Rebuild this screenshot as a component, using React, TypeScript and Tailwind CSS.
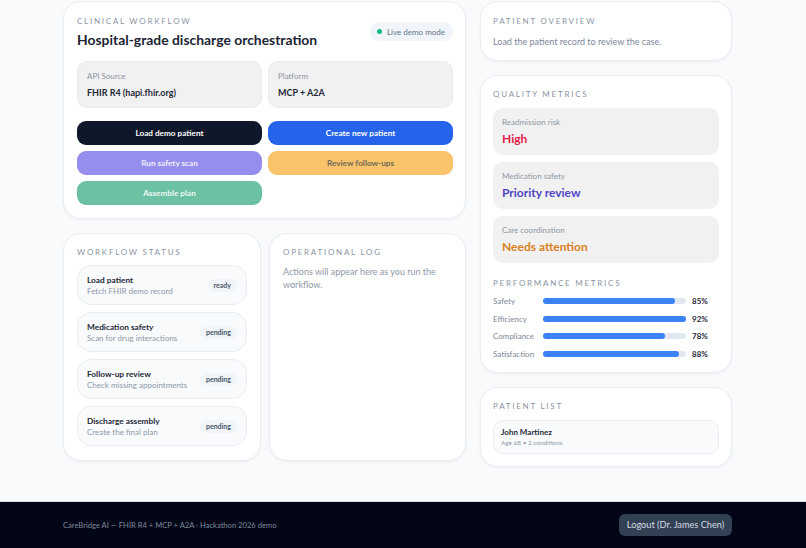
import React from "react";

const font = "font-['Lato','Noto_Sans',sans-serif]";

const Label = ({ text }: { text: string }) => (
  <p className="text-[8px] leading-[12px] uppercase tracking-[1.75px] text-[#8a94a3]">{text}</p>
);

const steps = [
  ["Load patient", "Fetch FHIR demo record", "ready"],
  ["Medication safety", "Scan for drug interactions", "pending"],
  ["Follow-up review", "Check missing appointments", "pending"],
  ["Discharge assembly", "Create the final plan", "pending"],
];

const quality = [
  ["Readmission risk", "High", "text-[#e11d48]"],
  ["Medication safety", "Priority review", "text-[#4f46c5]"],
  ["Care coordination", "Needs attention", "text-[#d97f1e]"],
];

const performance = [
  ["Safety", 92, "85%"],
  ["Efficiency", 100, "92%"],
  ["Compliance", 85, "78%"],
  ["Satisfaction", 95, "88%"],
] as const;

const cardClass = "rounded-[18px] border border-[#e8edf3] bg-white shadow-[0_1px_3px_rgba(15,23,42,0.05)]";

export default function App() {
  return (
    <div className={`${font} flex h-screen flex-col overflow-hidden bg-[#f8fafc] text-[#111827]`}>
      <main className="ml-[63px] flex w-[669px] flex-1 items-start gap-[14px] pt-px">
        {/* Left column */}
        <div className="flex w-[403px] flex-col gap-[14px]">
          <section className={`${cardClass} h-[218px] pt-[13px] pr-[12px] pl-[13px]`}>
            <div className="flex items-start justify-between">
              <div>
                <Label text="Clinical workflow" />
                <h1 className="mt-[3px] text-[13.9px] leading-[20px] font-bold text-[#1b2433]">Hospital-grade discharge orchestration</h1>
              </div>
              <div className="mt-[7px] flex h-[19px] items-center gap-[5px] rounded-full bg-[#f1f5f9] pr-[8px] pl-[7px] text-[8px] text-[#64748b]">
                <span className="h-[5px] w-[5px] rounded-full bg-[#10b981]" />
                Live demo mode
              </div>
            </div>
            <div className="mt-[11px] grid grid-cols-2 gap-[6px]">
              {[["API Source", "FHIR R4 (hapi.fhir.org)"], ["Platform", "MCP + A2A"]].map(([a, b]) => (
                <div key={a} className="h-[47px] rounded-[10px] border border-[#ebebeb] bg-[#f1f1f1] px-[9px] pt-[8px]">
                  <p className="text-[8px] leading-[12px] text-[#8e96a3]">{a}</p>
                  <p className="mt-[4px] text-[9px] leading-[14px] font-bold text-[#1f2937]">{b}</p>
                </div>
              ))}
            </div>
            <div className="mt-[13px] grid grid-cols-2 gap-[6px] text-[8.2px] font-bold">
              <button className="h-[24px] rounded-[9px] bg-[#0f172a] text-white">Load demo patient</button>
              <button className="h-[24px] rounded-[9px] bg-[#2563eb] text-white">Create new patient</button>
              <button className="h-[24px] rounded-[9px] bg-[#968eec] text-[#f1f0fd]">Run safety scan</button>
              <button className="h-[24px] rounded-[9px] bg-[#f9c369] text-[#6f6a5c]">Review follow-ups</button>
              <button className="h-[24px] rounded-[9px] bg-[#6cc0a3] text-[#edf8f4]">Assemble plan</button>
            </div>
          </section>

          <div className="flex gap-2">
            <section className={`${cardClass} h-[228px] w-[198px] px-[13px] pt-[12px]`}>
              <Label text="Workflow status" />
              <div className="mt-[7px] flex flex-col gap-[7px]">
                {steps.map(([title, sub, status]) => (
                  <div key={title} className="flex h-[40px] items-center justify-between rounded-[14px] border border-[#e8edf3] bg-[#f8fafc] px-[9px]">
                    <div className="pt-[2px]">
                      <p className="text-[8.3px] leading-[11px] font-bold text-[#1f2937]">{title}</p>
                      <p className="text-[8px] leading-[11px] whitespace-nowrap text-[#8e98a8]">{sub}</p>
                    </div>
                    <span className="rounded-full bg-[#f1f5f9] px-[6px] py-[1px] text-[7px] leading-[11px] font-bold text-[#475569]">{status}</span>
                  </div>
                ))}
              </div>
            </section>
            <section className={`${cardClass} h-[228px] w-[197px] px-[13px] pt-[12px]`}>
              <Label text="Operational log" />
              <p className="mt-[7px] text-[9px] leading-[13px] text-[#8e98a8]">Actions will appear here as you run the workflow.</p>
            </section>
          </div>
        </div>

        {/* Right column */}
        <div className="flex w-[252px] flex-col gap-[14px]">
          <section className={`${cardClass} h-[60px] px-[12px] pt-[13px]`}>
            <Label text="Patient overview" />
            <p className="mt-[8px] text-[9px] leading-[13px] text-[#7c8797]">Load the patient record to review the case.</p>
          </section>

          <section className={`${cardClass} h-[298px] px-[12px] pt-[12px]`}>
            <Label text="Quality metrics" />
            <div className="mt-[8px] flex flex-col gap-[7px]">
              {quality.map(([a, b, color]) => (
                <div key={a} className="h-[47px] rounded-[10px] bg-[#f1f1f1] px-[9px] pt-[8px]">
                  <p className="text-[8px] leading-[12px] text-[#8e96a3]">{a}</p>
                  <p className={`mt-[2px] text-[12px] leading-[17px] font-bold ${color}`}>{b}</p>
                </div>
              ))}
            </div>
            <div className="mt-[14px]">
              <Label text="Performance metrics" />
            </div>
            <div className="mt-[6px] flex flex-col gap-[5.7px]">
              {performance.map(([name, width, value]) => (
                <div key={name} className="flex h-[12px] items-center">
                  <span className="w-[50px] text-[8px] text-[#7c8797]">{name}</span>
                  <div className="h-[6px] w-[143px] rounded-full bg-[#e2e8f0]">
                    <div className="h-[6px] rounded-full bg-[#3b82f6]" style={{ width: `${width}%` }} />
                  </div>
                  <span className="ml-[6px] text-[8px] font-bold text-[#1f2937]">{value}</span>
                </div>
              ))}
            </div>
          </section>

          <section className={`${cardClass} h-[80px] px-[12px] pt-[12px]`}>
            <Label text="Patient list" />
            <div className="mt-[8px] h-[34px] rounded-[10px] border border-[#e8edf3] bg-[#f8fafc] px-[7px] pt-[5px]">
              <p className="text-[8px] leading-[12px] font-bold text-[#1f2937]">John Martinez</p>
              <p className="text-[6.4px] leading-[10px] text-[#8e98a8]">Age 68 • 2 conditions</p>
            </div>
          </section>
        </div>
      </main>

      <footer className="h-[47px] shrink-0 border-t border-[#d7dce3] bg-[#020617]">
        <div className="ml-[63px] flex h-full w-[669px] items-center justify-between">
          <p className="mt-[2px] text-[7.6px] text-[#7f8899]">CareBridge AI — FHIR R4 + MCP + A2A · Hackathon 2026 demo</p>
          <button className="h-[22px] w-[113px] rounded-[6px] bg-[#334155] text-[9.2px] text-[#d5dbe4]">Logout (Dr. James Chen)</button>
        </div>
      </footer>
    </div>
  );
}
